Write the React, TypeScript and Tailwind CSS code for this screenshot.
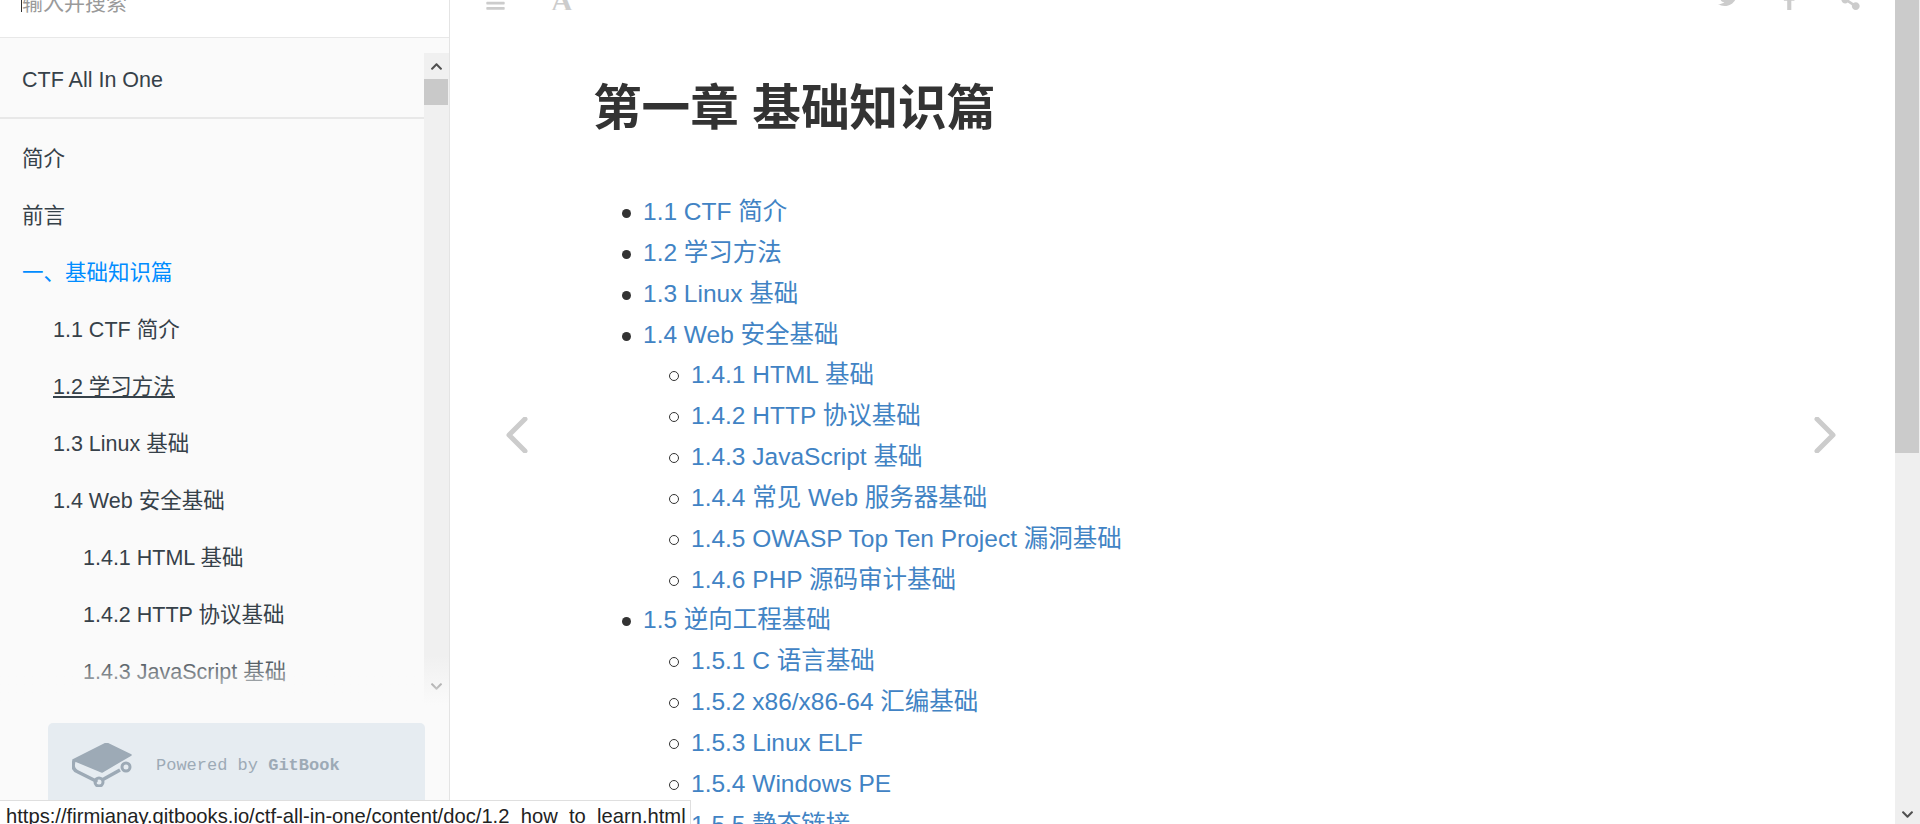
import { FaAlignJustify, FaChevronDown, FaChevronUp, FaFacebookF, FaShareAlt, FaTwitter } from "react-icons/fa";

const navItems = [
  { label: "简介", indent: "pl-[22px]" },
  { label: "前言", indent: "pl-[22px]" },
  { label: "一、基础知识篇", indent: "pl-[22px]", active: true },
  { label: "1.1 CTF 简介", indent: "pl-[53px]" },
  { label: "1.2 学习方法", indent: "pl-[53px]", hover: true },
  { label: "1.3 Linux 基础", indent: "pl-[53px]" },
  { label: "1.4 Web 安全基础", indent: "pl-[53px]" },
  { label: "1.4.1 HTML 基础", indent: "pl-[83px]" },
  { label: "1.4.2 HTTP 协议基础", indent: "pl-[83px]" },
  { label: "1.4.3 JavaScript 基础", indent: "pl-[83px]" },
];

const toc = [
  { label: "1.1 CTF 简介" },
  { label: "1.2 学习方法" },
  { label: "1.3 Linux 基础" },
  {
    label: "1.4 Web 安全基础",
    children: [
      "1.4.1 HTML 基础",
      "1.4.2 HTTP 协议基础",
      "1.4.3 JavaScript 基础",
      "1.4.4 常见 Web 服务器基础",
      "1.4.5 OWASP Top Ten Project 漏洞基础",
      "1.4.6 PHP 源码审计基础",
    ],
  },
  {
    label: "1.5 逆向工程基础",
    children: ["1.5.1 C 语言基础", "1.5.2 x86/x86-64 汇编基础", "1.5.3 Linux ELF", "1.5.4 Windows PE", "1.5.5 静态链接"],
  },
];

function GitBookLogo() {
  return (
    <svg width="60" height="44" viewBox="0 0 60 44" className="shrink-0">
      <path d="M34.5 0 L59 12 L30 29 L1 17 Z" fill="#9daab6" stroke="#9daab6" strokeWidth="1.5" strokeLinejoin="round" />
      <path d="M2 18 Q-1 26 6 29 L24 38" fill="none" stroke="#9daab6" strokeWidth="3.5" strokeLinecap="round" />
      <path d="M30 37 L48 27" fill="none" stroke="#9daab6" strokeWidth="3.5" />
      <circle cx="27" cy="39" r="4" fill="none" stroke="#9daab6" strokeWidth="3" />
      <circle cx="54" cy="24" r="4" fill="none" stroke="#9daab6" strokeWidth="3" />
    </svg>
  );
}

function Sidebar() {
  return (
    <aside className="relative flex h-full w-[450px] shrink-0 flex-col border-r border-[#e4e4e4] bg-[#fafafa] text-[21.5px] text-[#364149]">
      <div className="relative h-[38px] shrink-0 overflow-hidden border-b border-[#e8e8e8] bg-white">
        <div className="absolute left-[21px] top-0 h-[12px] w-[1px] bg-[#333]" />
        <div className="absolute bottom-[19px] left-[22px] text-[21px] leading-[30px] text-[#9a9a9a]">输入并搜索</div>
      </div>
      <div className="mt-[15px] flex h-[652px] shrink-0 overflow-hidden">
        <nav className="w-[424px] shrink-0 overflow-hidden">
          <div className="flex h-[54px] items-center pl-[22px]">CTF All In One</div>
          <div className="mt-[10px] h-[2px] w-full bg-[#e8e8e8]" />
          <ul className="mt-[12px]">
            {navItems.map((item) => (
              <li
                key={item.label}
                className={`flex h-[57px] items-center ${item.indent} ${item.active ? "text-[#008cff]" : ""}`}
              >
                <span className={item.hover ? "underline underline-offset-2" : ""}>{item.label}</span>
              </li>
            ))}
          </ul>
        </nav>
        <div className="flex w-[25px] shrink-0 flex-col bg-[#f0f0f0] pr-[1px]">
          <div className="flex h-[26px] items-center justify-center text-[#505050]">
            <FaChevronUp size={13} />
          </div>
          <div className="h-[26px] bg-[#c9c9c9]" />
          <div className="flex flex-1 items-end justify-center pb-[12px] text-[#505050]">
            <FaChevronDown size={13} />
          </div>
        </div>
      </div>
      <div className="pointer-events-none absolute left-0 right-0 top-[655px] h-[50px] bg-gradient-to-b from-transparent to-[#fafafa]" />
      <div className="ml-[48px] mt-[18px] flex h-[110px] w-[377px] shrink-0 items-start gap-[24px] rounded-t-[5px] bg-[#e6ecf1] pl-[24px] pt-[20px]">
        <GitBookLogo />
        <span className="mt-[11px] font-['Liberation_Mono',monospace] text-[17px] leading-[24px] text-[#9daab6]">
          Powered by <b>GitBook</b>
        </span>
      </div>
    </aside>
  );
}

function Content() {
  return (
    <main className="relative h-full min-w-0 flex-1 overflow-hidden bg-white">
      <div className="flex h-[10px] items-end overflow-hidden pl-[35px] pr-[14px] text-[#cccccc]">
        <FaAlignJustify size={21} className="mb-[-1px] shrink-0" />
        <span className="mb-[-6px] ml-[45px] font-['Liberation_Serif',serif] text-[30px] font-bold leading-[30px]">A</span>
        <div className="ml-auto flex items-end">
          <span className="flex w-[61px] justify-center">
            <FaTwitter size={21} className="mb-[2px]" />
          </span>
          <span className="flex w-[61px] justify-center">
            <FaFacebookF size={21} />
          </span>
          <span className="flex w-[61px] justify-center">
            <FaShareAlt size={21} />
          </span>
        </div>
      </div>
      <div className="ml-[144px] text-[24.5px] leading-[40.85px] text-[#333]">
        <h1 className="ml-[-1px] mt-[64px] text-[48.6px] font-bold leading-[68px]">第一章 基础知识篇</h1>
        <ul className="ml-[1px] mt-[50px] list-none pl-[48px]">
          {toc.map((item) => (
            <li
              key={item.label}
              className="relative before:absolute before:left-[-21px] before:top-[17px] before:size-[9px] before:rounded-full before:bg-[#333]"
            >
              <span className="text-[#4183c4]">{item.label}</span>
              {item.children && (
                <ul className="list-none pl-[48px]">
                  {item.children.map((child) => (
                    <li
                      key={child}
                      className="relative before:absolute before:left-[-22px] before:top-[16px] before:size-[10px] before:rounded-full before:border before:border-[#333]"
                    >
                      <span className="text-[#4183c4]">{child}</span>
                    </li>
                  ))}
                </ul>
              )}
            </li>
          ))}
        </ul>
      </div>
      <svg width="22" height="36" viewBox="0 0 22 36" className="absolute left-[56px] top-[417px]" fill="none">
        <path d="M19 2 L3 18 L19 34" stroke="#cccccc" strokeWidth="5" strokeLinecap="round" strokeLinejoin="round" />
      </svg>
      <svg width="22" height="36" viewBox="0 0 22 36" className="absolute left-[1364px] top-[417px]" fill="none">
        <path d="M3 2 L19 18 L3 34" stroke="#cccccc" strokeWidth="5" strokeLinecap="round" strokeLinejoin="round" />
      </svg>
    </main>
  );
}

function PageScrollbar() {
  return (
    <div className="flex h-full w-[25px] shrink-0 flex-col bg-[#efefef] pr-[1px]">
      <div className="h-[453px] bg-[#cbcbcb]" />
      <div className="flex flex-1 items-end justify-center pb-[3px] text-[#505050]">
        <FaChevronDown size={13} />
      </div>
    </div>
  );
}

export default function App() {
  return (
    <div className="relative flex h-[824px] w-full overflow-hidden font-['Liberation_Sans','Noto_Sans_CJK_SC',sans-serif]">
      <Sidebar />
      <Content />
      <PageScrollbar />
      <div className="absolute bottom-0 left-0 h-[24px] w-[691px] overflow-hidden whitespace-nowrap border-r border-t border-[#dfdfdf] bg-white pl-[6px] text-[20.2px] leading-[30px] text-[#222]">
        https://firmianay.gitbooks.io/ctf-all-in-one/content/doc/1.2_how_to_learn.html
      </div>
    </div>
  );
}
